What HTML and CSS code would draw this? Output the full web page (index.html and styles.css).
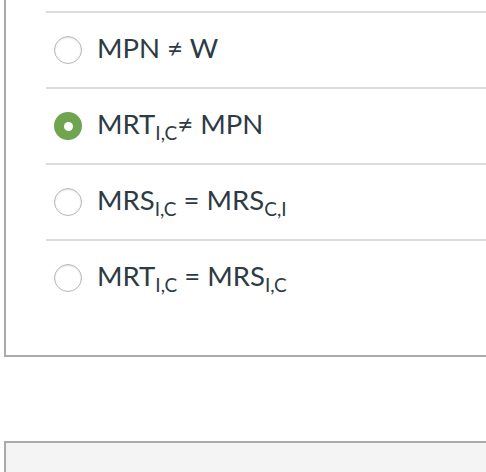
FILE: index.html
```html
<!DOCTYPE html>
<html>
<head>
<meta charset="utf-8">
<link rel="stylesheet" href="styles.css">
</head>
<body>
<div class="panel">
  <div class="answers">
    <div class="answer">
      <span class="radio"></span>
      <span class="label">MPN ≠ W</span>
    </div>
    <div class="answer">
      <span class="radio checked"></span>
      <span class="label">MRT<sub>I,C</sub>≠ MPN</span>
    </div>
    <div class="answer">
      <span class="radio"></span>
      <span class="label">MRS<sub>I,C</sub> = MRS<sub>C,I</sub></span>
    </div>
    <div class="answer">
      <span class="radio"></span>
      <span class="label">MRT<sub>I,C</sub> = MRS<sub>I,C</sub></span>
    </div>
  </div>
</div>
<div class="next-panel"></div>
</body>
</html>
```

FILE: styles.css
```css
html, body {
  margin: 0;
  padding: 0;
  background: #fff;
  overflow: hidden;
}
body {
  font-family: Lato, "Liberation Sans", sans-serif;
  color: #2d3b45;
  width: 486px;
  height: 472px;
}
.panel {
  margin-left: 4px;
  border-left: 2px solid #aaaaaa;
  border-bottom: 2px solid #aaaaaa;
  padding-top: 11px;
  padding-bottom: 40px;
}
.answers {
  margin-left: 40px;
}
.answer {
  border-top: 2px solid #dcdcdc;
  height: 74px;
  display: flex;
  align-items: center;
  padding-left: 8px;
}
.radio {
  width: 28px;
  height: 28px;
  box-sizing: border-box;
  border-radius: 50%;
  border: 1px solid #b8b8b8;
  background: #fff;
  box-shadow: inset 0 1px 2px rgba(0,0,0,0.12);
  flex: none;
  display: flex;
  align-items: center;
  justify-content: center;
}
.radio.checked {
  border: none;
  background: #6fa54f;
  box-shadow: none;
}
.radio.checked::after {
  content: "";
  width: 9px;
  height: 9px;
  border-radius: 50%;
  background: #fff;
}
.label {
  margin-left: 15px;
  margin-bottom: 4px;
  font-size: 27.5px;
  line-height: 32px;
  white-space: nowrap;
}
.label sub {
  font-size: 19px;
  vertical-align: -6px;
  line-height: 0;
}
.next-panel {
  margin-top: 84px;
  margin-left: 4px;
  height: 40px;
  border-left: 2px solid #aaaaaa;
  border-top: 2px solid #aaaaaa;
  background: #f4f4f4;
}
```
